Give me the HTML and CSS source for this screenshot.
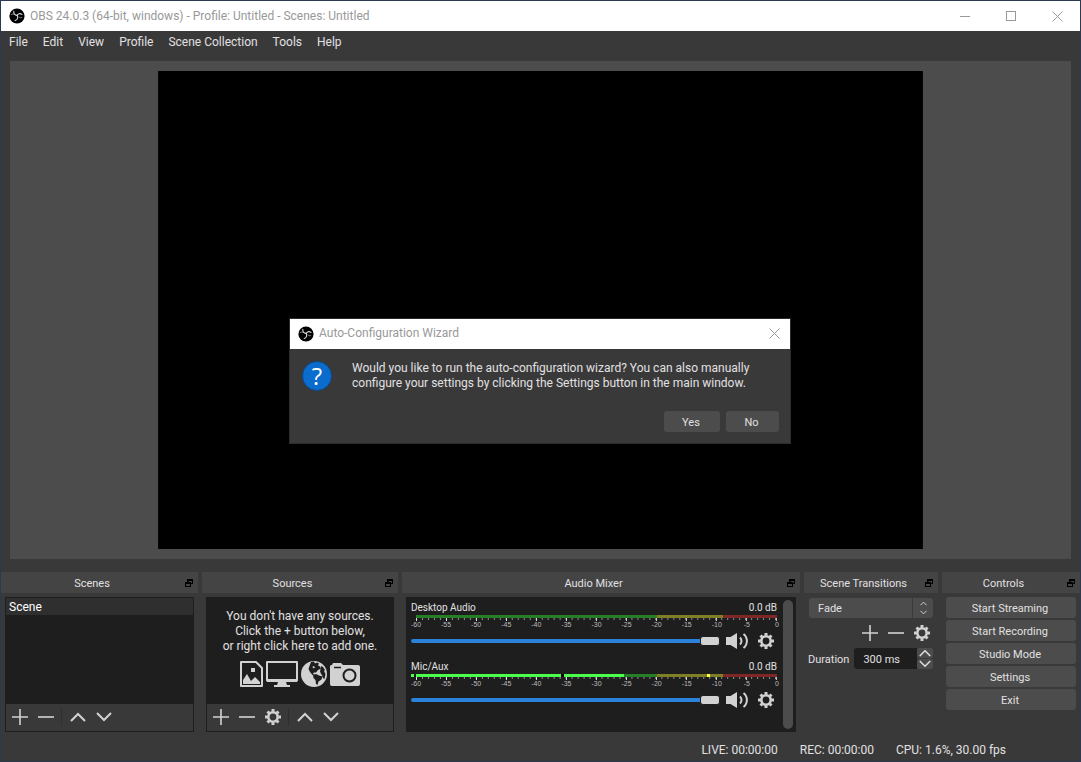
FILE: index.html
```html
<!DOCTYPE html>
<html lang="en">
<head>
    <meta charset="UTF-8">
    <meta name="viewport" content="width=device-width, initial-scale=1.0">
    <title>OBS 24.0.3 (64-bit, windows) - Profile: Untitled - Scenes: Untitled</title>
    <link rel="stylesheet" href="styles.css">
</head>
<body>
    <!-- Icon sprite -->
    <svg class="sprite" aria-hidden="true">
        <symbol id="logo" viewBox="0 0 16 16">
            <circle cx="8" cy="8" r="7.6" fill="#000"/>
            <g fill="none" stroke="#ddd" stroke-width="1.1" stroke-linecap="round">
                <path d="M8.200 7.400C6.200 7.200 4.600 5.800 4.800 3.400"/>
                <path d="M8.200 7.400C9 5.600 10.900 4.900 13 6.400"/>
                <path d="M8.200 7.400C9.300 9.200 8.600 11.800 6.200 12.600"/>
                <path d="M2.300 6.600c.8-.6 1.700-.7 2.700-.3M12.800 9.600c-.9.400-1.900.2-2.700-.5" stroke-width=".6"/>
            </g>
        </symbol>
        <symbol id="close" viewBox="0 0 11 11"><path d="M.5.5l10 10M10.5.5l-10 10" fill="none" stroke="currentColor"/></symbol>
        <symbol id="popout" viewBox="0 0 8 8">
            <path d="M2 0h6v5H6v3H0V3h2zM3.500 2v1H6v1h1V2zM1 5v2h4V5z" fill="#000" fill-rule="evenodd"/>
        </symbol>
        <symbol id="plus" viewBox="0 0 16 16"><path d="M8 0v16M0 8h16" stroke="currentColor" stroke-width="1.6"/></symbol>
        <symbol id="minus" viewBox="0 0 16 16"><path d="M0 8h16" stroke="currentColor" stroke-width="1.6"/></symbol>
        <symbol id="up" viewBox="0 0 16 16"><path d="M1 12l7-7 7 7" fill="none" stroke="currentColor" stroke-width="2"/></symbol>
        <symbol id="down" viewBox="0 0 16 16"><path d="M1 4l7 7 7-7" fill="none" stroke="currentColor" stroke-width="2"/></symbol>
        <symbol id="gear" viewBox="0 0 16 16">
            <circle cx="8" cy="8" r="4.7" fill="none" stroke="currentColor" stroke-width="2.6"/>
            <path d="M8 0v2.6M8 13.4V16M0 8h2.6M13.4 8H16M2.5 2.5l1.8 1.8M11.7 11.7l1.8 1.8M2.5 13.5l1.8-1.8M11.7 4.3l1.8-1.8" stroke="currentColor" stroke-width="3"/>
        </symbol>
        <symbol id="speaker" viewBox="0 0 22 16">
            <path d="M0 4h4.5L11 0v16l-6.500-4H0z" fill="currentColor"/>
            <path d="M14 4.500c2 1.800 2 5.200 0 7M17.500 1c4.500 3.500 4.500 10.500 0 14" fill="none" stroke="currentColor" stroke-width="2"/>
        </symbol>
        <symbol id="image" viewBox="0 0 23 26">
            <path d="M1 1h15l6 6v18H1z" fill="none" stroke="currentColor" stroke-width="2" stroke-linejoin="round"/>
            <path d="M3 23v-4l4-6 4 7 4-4 5 5v2z" fill="currentColor"/>
            <rect x="11" y="7" width="4" height="4" fill="currentColor"/>
        </symbol>
        <symbol id="display" viewBox="0 0 32 26">
            <path d="M1 1h30v18.500H1z" fill="none" stroke="currentColor" stroke-width="2" stroke-linejoin="round"/>
            <path d="M1 18h30v3H1zM12 21h8l1 3h3v2H8v-2h3z" fill="currentColor"/>
        </symbol>
        <symbol id="globe" viewBox="0 0 26 26">
            <circle cx="13" cy="13" r="13" fill="currentColor"/>
            <path d="M10 1l3-.5 1 2 2-1 2 1-1 2 2 1 1 2-3 1.500-2 2.500-2 0-1 1 1 1 2 .5-.5 1.500-3-1.500L9 11 7.500 8l1-3zM12 14l3-1 3 1.500 3.500 1-1 3-3 2-1 3.500-1.500-1-.5-4-2-2zM20 5l2 1 2 3-1 1 1.500 3-1 5-1.500-1-1-3-1-1-1-3 1-3z" fill="#1f1e1f"/>
            <path d="M12 5l2 1-1 1.500-1.500-1z" fill="currentColor"/>
        </symbol>
        <symbol id="camera" viewBox="0 0 30 23">
            <path d="M3 0h8l2 2h15a2 2 0 0 1 2 2v17a2 2 0 0 1-2 2H2a2 2 0 0 1-2-2V3a2 2 0 0 1 2-1z" fill="currentColor"/>
            <path d="M4 4.500h7" stroke="#1f1e1f" stroke-width="1.500"/>
            <circle cx="19.500" cy="12.500" r="6" fill="none" stroke="#1f1e1f" stroke-width="2"/>
        </symbol>
    </svg>

    <div class="window">
        <header class="titlebar">
            <svg class="logo"><use href="#logo"/></svg>
            <h1 class="title">OBS 24.0.3 (64-bit, windows) - Profile: Untitled - Scenes: Untitled</h1>
            <div class="window-buttons">
                <button aria-label="Minimize"><span class="glyph-min"></span></button>
                <button aria-label="Maximize"><span class="glyph-max"></span></button>
                <button aria-label="Close"><svg class="glyph-close"><use href="#close"/></svg></button>
            </div>
        </header>

        <nav class="menubar">
            <button>File</button>
            <button>Edit</button>
            <button>View</button>
            <button>Profile</button>
            <button>Scene Collection</button>
            <button>Tools</button>
            <button>Help</button>
        </nav>

        <main class="preview">
            <!-- 16:10 output, scales to the room left above the docks -->
            <svg class="canvas" viewBox="0 0 1280 800"><rect width="1280" height="800"/></svg>
        </main>

        <div class="docks">
            <section class="dock">
                <header class="dock-header"><h2>Scenes</h2><button aria-label="Undock"><svg><use href="#popout"/></svg></button></header>
                <div class="panel">
                    <ul class="scene-list">
                        <li class="selected">Scene</li>
                    </ul>
                    <div class="toolbar">
                        <button aria-label="Add scene"><svg><use href="#plus"/></svg></button>
                        <button aria-label="Remove scene"><svg><use href="#minus"/></svg></button>
                        <span class="separator"></span>
                        <button aria-label="Move up"><svg><use href="#up"/></svg></button>
                        <button aria-label="Move down"><svg><use href="#down"/></svg></button>
                    </div>
                </div>
            </section>

            <section class="dock">
                <header class="dock-header"><h2>Sources</h2><button aria-label="Undock"><svg><use href="#popout"/></svg></button></header>
                <div class="panel">
                    <div class="sources-empty">
                        <p>You don't have any sources.<br>Click the + button below,<br>or right click here to add one.</p>
                        <div class="source-icons">
                            <svg class="icon-image"><use href="#image"/></svg>
                            <svg class="icon-display"><use href="#display"/></svg>
                            <svg class="icon-globe"><use href="#globe"/></svg>
                            <svg class="icon-camera"><use href="#camera"/></svg>
                        </div>
                    </div>
                    <div class="toolbar">
                        <button aria-label="Add source"><svg><use href="#plus"/></svg></button>
                        <button aria-label="Remove source"><svg><use href="#minus"/></svg></button>
                        <button aria-label="Source properties"><svg><use href="#gear"/></svg></button>
                        <span class="separator"></span>
                        <button aria-label="Move up"><svg><use href="#up"/></svg></button>
                        <button aria-label="Move down"><svg><use href="#down"/></svg></button>
                    </div>
                </div>
            </section>

            <section class="dock">
                <header class="dock-header"><h2>Audio Mixer</h2><button aria-label="Undock"><svg><use href="#popout"/></svg></button></header>
                <div class="panel mixer">
                    <div class="channels">
                        <div class="channel">
                            <div class="channel-head"><label for="desktop-volume">Desktop Audio</label><span>0.0 dB</span></div>
                            <div class="meter"></div>
                            <div class="ticks"></div>
                            <ul class="scale">
                                <li>-60</li><li>-55</li><li>-50</li><li>-45</li><li>-40</li><li>-35</li><li>-30</li><li>-25</li><li>-20</li><li>-15</li><li>-10</li><li>-5</li><li>0</li>
                            </ul>
                            <div class="channel-controls">
                                <input type="range" id="desktop-volume" min="0" max="100" value="100">
                                <button aria-label="Mute"><svg class="speaker"><use href="#speaker"/></svg></button>
                                <button aria-label="Audio settings"><svg class="gear"><use href="#gear"/></svg></button>
                            </div>
                        </div>
                        <div class="channel">
                            <div class="channel-head"><label for="mic-volume">Mic/Aux</label><span>0.0 dB</span></div>
                            <div class="meter">
                                <span class="input-level"></span>
                                <span class="level" style="width: 57.6%"></span>
                                <span class="magnitude" style="left: 40.3%"></span>
                                <span class="peak" style="left: 80.6%"></span>
                            </div>
                            <div class="ticks"></div>
                            <ul class="scale">
                                <li>-60</li><li>-55</li><li>-50</li><li>-45</li><li>-40</li><li>-35</li><li>-30</li><li>-25</li><li>-20</li><li>-15</li><li>-10</li><li>-5</li><li>0</li>
                            </ul>
                            <div class="channel-controls">
                                <input type="range" id="mic-volume" min="0" max="100" value="100">
                                <button aria-label="Mute"><svg class="speaker"><use href="#speaker"/></svg></button>
                                <button aria-label="Audio settings"><svg class="gear"><use href="#gear"/></svg></button>
                            </div>
                        </div>
                    </div>
                    <div class="scrollbar"></div>
                </div>
            </section>

            <section class="dock">
                <header class="dock-header"><h2>Scene Transitions</h2><button aria-label="Undock"><svg><use href="#popout"/></svg></button></header>
                <div class="transitions">
                    <div class="select">
                        <select aria-label="Transition">
                            <option>Fade</option>
                            <option>Cut</option>
                        </select>
                        <span class="select-arrows"><svg><use href="#up"/></svg><svg><use href="#down"/></svg></span>
                    </div>
                    <div class="toolbar toolbar-right">
                        <button aria-label="Add transition"><svg><use href="#plus"/></svg></button>
                        <button aria-label="Remove transition"><svg><use href="#minus"/></svg></button>
                        <button aria-label="Transition properties"><svg><use href="#gear"/></svg></button>
                    </div>
                    <div class="duration">
                        <label for="duration">Duration</label>
                        <input type="text" id="duration" value="300 ms">
                        <div class="spin">
                            <button aria-label="Increase"><svg><use href="#up"/></svg></button>
                            <button aria-label="Decrease"><svg><use href="#down"/></svg></button>
                        </div>
                    </div>
                </div>
            </section>

            <section class="dock">
                <header class="dock-header"><h2>Controls</h2><button aria-label="Undock"><svg><use href="#popout"/></svg></button></header>
                <div class="controls">
                    <button class="btn">Start Streaming</button>
                    <button class="btn">Start Recording</button>
                    <button class="btn">Studio Mode</button>
                    <button class="btn">Settings</button>
                    <button class="btn">Exit</button>
                </div>
            </section>
        </div>

        <footer class="statusbar">
            <span>LIVE: 00:00:00</span>
            <span>REC: 00:00:00</span>
            <span>CPU: 1.6%, 30.00 fps</span>
        </footer>
    </div>

    <!-- Auto-configuration prompt -->
    <div class="overlay">
        <div class="dialog" role="dialog" aria-labelledby="dialog-title">
            <header class="dialog-titlebar">
                <svg class="logo"><use href="#logo"/></svg>
                <h2 class="title" id="dialog-title">Auto-Configuration Wizard</h2>
                <button aria-label="Close"><svg class="glyph-close"><use href="#close"/></svg></button>
            </header>
            <div class="dialog-body">
                <span class="question">?</span>
                <p>Would you like to run the auto-configuration wizard? You can also manually configure your settings by clicking the Settings button in the main window.</p>
            </div>
            <div class="dialog-buttons">
                <button class="btn btn-yes">Yes</button>
                <button class="btn btn-no">No</button>
            </div>
        </div>
    </div>
</body>
</html>
```
FILE: styles.css
```css
* {
    box-sizing: border-box;
}

body {
    margin: 0;
    background-color: #3a393a;
    color: #e1e0e1;
    font-family: Roboto, "Open Sans", sans-serif;
    font-size: 11px;
    line-height: 15px;
}

h1, h2, p, ul {
    margin: 0;
    padding: 0;
    font-size: inherit;
    font-weight: normal;
    list-style: none;
}

button, input, select {
    margin: 0;
    padding: 0;
    border: none;
    background: none;
    color: inherit;
    font: inherit;
}

svg {
    display: block;
}

.sprite {
    position: absolute;
    width: 0;
    height: 0;
}

.window {
    display: flex;
    flex-direction: column;
    height: 100vh;
    border: 1px solid #2b3a50;
}

/* Title bar */
.titlebar {
    display: flex;
    flex-shrink: 0;
    align-items: center;
    height: 30px;
    padding-left: 8px;
    background-color: #fff;
    color: #999;
}

.logo {
    width: 16px;
    height: 16px;
    margin-right: 5px;
}

.title {
    flex: 1;
    font-size: 12px;
}

.window-buttons {
    display: flex;
}

.window-buttons button {
    display: flex;
    align-items: center;
    justify-content: center;
    width: 46px;
    height: 30px;
}

.glyph-min {
    width: 10px;
    height: 1px;
    background-color: #999;
}

.glyph-max {
    width: 10px;
    height: 10px;
    border: 1px solid #999;
}

.glyph-close {
    width: 11px;
    height: 11px;
}

.menubar {
    display: flex;
    flex-shrink: 0;
    height: 22px;
    padding-left: 1px;
    font-size: 12px;
}

.menubar button {
    padding: 0 8px 0 7px;
}

/* Preview */
.preview {
    display: grid;
    flex: 1 1 0;
    grid-template-rows: minmax(0, 1fr);
    min-height: 0;
    margin: 8px 9px 13px;
    padding: 10px;
    background-color: #4c4c4c;
}

.canvas {
    width: 100%;
    height: 100%;
    fill: #000;
}

/* Docks */
.docks {
    display: grid;
    grid-template-columns: 197fr 196fr 398fr 134fr 138fr;
    gap: 4px;
}

.dock {
    display: flex;
    flex-direction: column;
    min-width: 0;
}

.dock-header {
    display: flex;
    align-items: center;
    height: 21px;
    padding-right: 5px;
    background-color: #454445;
}

.dock-header h2 {
    flex: 1;
    padding: 2px 2px 0 0;
    text-align: center;
    white-space: nowrap;
}

.dock-header svg {
    width: 8px;
    height: 8px;
}

.panel {
    display: flex;
    flex-direction: column;
    height: 135px;
    margin: 4px 4px 0;
    border: 1px solid #1f1e1f;
}

.scene-list {
    flex: 1;
    background-color: #1f1e1f;
    font-size: 12px;
}

.scene-list li {
    height: 17px;
    padding-left: 3px;
    line-height: 19px;
}

.scene-list .selected {
    background-color: #302f30;
    color: #fff;
}

.toolbar {
    display: flex;
    align-items: flex-start;
    height: 27px;
    padding-left: 1px;
    color: #d2d2d2;
}

.toolbar button {
    display: flex;
    align-items: center;
    justify-content: center;
    width: 26px;
    height: 26px;
}

.toolbar svg {
    width: 16px;
    height: 16px;
}

.separator {
    width: 1px;
    height: 18px;
    margin: 4px 3px 0 2px;
    background-color: #302f30;
}

.sources-empty {
    flex: 1;
    padding-top: 11px;
    background-color: #1f1e1f;
    font-size: 12px;
    text-align: center;
    white-space: nowrap;
}

.source-icons {
    display: flex;
    align-items: center;
    justify-content: center;
    gap: 3px;
    padding-top: 7px;
    color: #d2d2d2;
}

.icon-image {
    width: 23px;
    height: 26px;
}

.icon-display {
    width: 32px;
    height: 26px;
}

.icon-globe {
    width: 26px;
    height: 26px;
}

.icon-camera {
    width: 30px;
    height: 23px;
}

/* Audio mixer */
.mixer {
    flex-direction: row;
    gap: 6px;
    padding: 2px 2px 2px 4px;
    background-color: #1f1e1f;
}

.channels {
    display: flex;
    flex: 1;
    flex-direction: column;
    gap: 7px;
}

.channel-head {
    display: flex;
    justify-content: space-between;
    height: 15px;
    font-size: 10px;
}

.meter {
    position: relative;
    height: 3px;
    margin-left: 5px;
    background: linear-gradient(to right, #267f26 66.7%, #7f7f26 66.7%, #7f7f26 85%, #7f2626 85%);
}

.meter span {
    position: absolute;
    top: 0;
    height: 3px;
}

.meter .input-level {
    left: -5px;
    width: 3px;
    background-color: #4cff4c;
}

.meter .level {
    left: 0;
    background-color: #4cff4c;
}

.meter .magnitude {
    width: 3px;
    background-color: #000;
}

.meter .peak {
    width: 3px;
    background-color: #ffff4c;
}

.ticks {
    height: 3px;
    margin-left: 5px;
    background-image:
        linear-gradient(to right, #e1e0e1 1px, transparent 1px),
        linear-gradient(to right, #8f8f8f 1px, transparent 1px);
    background-repeat: repeat-x;
    background-size: calc((100% - 1px) / 12) 3px, calc((100% - 1px) / 60) 2px;
}

.scale {
    display: flex;
    justify-content: space-between;
    height: 8px;
    margin-left: 5px;
    color: #bbb;
    font-family: "Liberation Sans", sans-serif;
    font-size: 7px;
    line-height: 8px;
}

.scale li {
    display: flex;
    justify-content: center;
    width: 0;
}

.channel-controls {
    display: flex;
    align-items: center;
    height: 23px;
    color: #d2d2d2;
}

.channel-controls input {
    flex: 1;
    min-width: 0;
    height: 10px;
    margin-right: 6px;
    appearance: none;
}

.channel-controls input::-webkit-slider-runnable-track {
    height: 4px;
    border-radius: 2px;
    background-color: #2a82da;
}

.channel-controls input::-webkit-slider-thumb {
    width: 20px;
    height: 10px;
    margin-top: -3px;
    border: 1px solid #1f1e1f;
    border-radius: 3px;
    background-color: #d2d2d2;
    appearance: none;
}

.speaker {
    width: 22px;
    height: 18px;
    margin-right: 10px;
}

.gear {
    width: 16px;
    height: 16px;
    margin-right: 3px;
}

.scrollbar {
    width: 10px;
    border-radius: 5px;
    background-color: #4c4c4c;
}

/* Scene transitions */
.transitions {
    padding: 5px 5px 0 4px;
}

.select {
    position: relative;
    margin-left: 1px;
}

.select select {
    display: block;
    width: 100%;
    height: 20px;
    padding: 1px 0 0 9px;
    border-radius: 3px;
    background-color: #4c4c4c;
    appearance: none;
}

.select-arrows {
    position: absolute;
    top: 0;
    right: 0;
    display: flex;
    flex-direction: column;
    align-items: center;
    justify-content: center;
    gap: 2px;
    width: 21px;
    height: 20px;
    border-left: 1px solid #3a393a;
    pointer-events: none;
}

.select-arrows svg {
    width: 7px;
    height: 7px;
}

.toolbar-right {
    justify-content: flex-end;
    height: 26px;
    margin: 2px -2px 2px 0;
}

.duration {
    display: flex;
    align-items: center;
    height: 21px;
}

.duration label {
    padding-top: 2px;
}

.duration input {
    flex: 1;
    min-width: 0;
    height: 21px;
    margin-left: 5px;
    padding: 2px 0 0 9px;
    border-radius: 3px 0 0 3px;
    background-color: #1f1e1f;
}

.spin {
    display: flex;
    flex-direction: column;
    gap: 1px;
}

.spin button {
    display: flex;
    align-items: center;
    justify-content: center;
    width: 16px;
    height: 10px;
    border-radius: 2px;
    background-color: #4c4c4c;
}

.spin svg {
    width: 12px;
    height: 12px;
}

/* Controls */
.controls {
    display: flex;
    flex-direction: column;
    gap: 2px;
    padding: 4px 4px 0;
}

.btn {
    height: 21px;
    padding: 2px 2px 0 0;
    border-radius: 3px;
    background-color: #4c4c4c;
}

.statusbar {
    display: flex;
    flex-shrink: 0;
    align-items: center;
    justify-content: flex-end;
    gap: 22px;
    height: 29px;
    padding: 8px 74px 0 0;
    font-size: 12px;
}

/* Dialog */
.overlay {
    position: fixed;
    inset: 0 1px 0 0;
    display: flex;
    align-items: center;
    justify-content: center;
}

.dialog {
    width: 502px;
    border: 1px solid #2b2b2b;
    background-color: #3a393a;
}

.dialog-titlebar {
    display: flex;
    align-items: center;
    height: 30px;
    padding: 0 10px 1px 8px;
    background-color: #fff;
    color: #999;
}

.dialog-body {
    display: flex;
    gap: 20px;
    padding: 12px 12px 0;
}

.dialog-body p {
    flex: 1;
    font-size: 12px;
}

.question {
    width: 30px;
    height: 30px;
    border: 1px solid #0a4a8c;
    border-radius: 50%;
    background-color: #0a6ccd;
    color: #fff;
    font-family: "Open Sans", sans-serif;
    font-size: 24px;
    line-height: 28px;
    text-align: center;
}

.dialog-buttons {
    display: flex;
    justify-content: flex-end;
    gap: 6px;
    padding: 20px 11px 11px;
}

.btn-yes {
    width: 56px;
}

.btn-no {
    width: 53px;
}
```
